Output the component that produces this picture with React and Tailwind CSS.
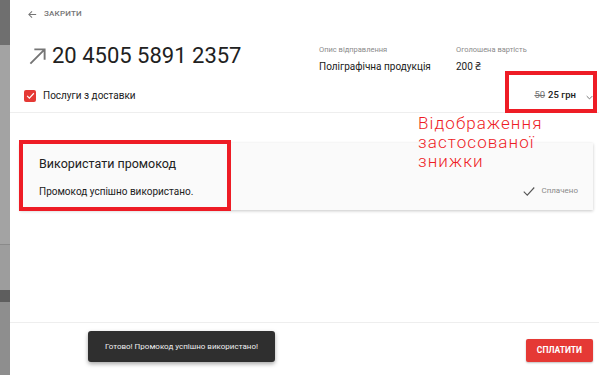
import React from 'react';

const ArrowLeft = () => (
  <svg width="11" height="11" viewBox="0 0 24 24" fill="none" stroke="#757575" strokeWidth="2.2">
    <path d="M20 12H4M11 5l-7 7 7 7" />
  </svg>
);

const ArrowUpRight = () => (
  <svg width="19" height="19" viewBox="0 0 24 24" fill="none" stroke="#757575" strokeWidth="2.4">
    <path d="M3 21L21 3M8 3h13v13" />
  </svg>
);

const Check = ({ size = 12, color = '#616161', width = 2 }) => (
  <svg width={size} height={size} viewBox="0 0 24 24" fill="none" stroke={color} strokeWidth={width}>
    <path d="M3 13l6 6L21 6" />
  </svg>
);

export default function App() {
  return (
    <div className="relative flex w-[599px] h-[375px] overflow-hidden bg-white" style={{ fontFamily: 'Roboto, "Noto Sans", sans-serif' }}>
      {/* dimmed page behind the drawer */}
      <div className="w-[10px] flex flex-col bg-[#9c9c9c]">
        <div className="h-[45px] bg-[#6f6f6f]" />
        <div className="h-[200px] bg-[#a3a3a3] border-b border-[#8a8a8a]" />
        <div className="h-[45px] bg-[#9d9d9d]" />
        <div className="h-[12px] bg-[#5e5e5e]" />
        <div className="flex-1 bg-[#8e8e8e]" />
      </div>

      {/* drawer */}
      <div className="flex-1 flex flex-col bg-white">
        <div className="h-[28px] flex items-center gap-[6px] pl-[17px]">
          <ArrowLeft />
          <span className="text-[8px] font-medium tracking-wide text-[#757575]">ЗАКРИТИ</span>
        </div>

        <div className="flex items-start pl-[18px] pt-[14px] h-[54px]">
          <div className="flex items-center gap-[5px] w-[291px]">
            <ArrowUpRight />
            <span className="text-[22px] leading-[28px] text-[#212121]">20 4505 5891 2357</span>
          </div>
          <div className="w-[137px] pt-[2px]">
            <div className="text-[7.5px] text-[#8a8a8a]">Опис відправлення</div>
            <div className="text-[10px] text-[#212121] mt-[4px]">Поліграфічна продукція</div>
          </div>
          <div className="pt-[2px]">
            <div className="text-[7.5px] text-[#8a8a8a]">Оголошена вартість</div>
            <div className="text-[10px] text-[#212121] mt-[4px]">200 ₴</div>
          </div>
        </div>

        <div className="flex items-center h-[31px] pb-[3px] pl-[14px] pr-[6px] border-b border-[#eeeeee]">
          <div className="w-[12px] h-[12px] rounded-[2px] bg-[#e53935] flex items-center justify-center">
            <Check size={9} color="#ffffff" width={3} />
          </div>
          <span className="ml-[7px] text-[10px] text-[#212121]">Послуги з доставки</span>
          <div className="ml-auto flex items-center">
            <span className="text-[9.5px] text-[#757575] line-through">50</span>
            <span className="ml-[3px] text-[9.5px] font-medium text-[#212121]">25 грн</span>
            <svg className="ml-[10px] mt-[4px]" width="7" height="5" viewBox="0 0 10 6" fill="none" stroke="#757575" strokeWidth="1.4">
              <path d="M1 1l4 4 4-4" />
            </svg>
          </div>
        </div>

        <div className="mt-[30px] ml-[10px] mr-[6px] h-[67px] bg-[#fafafa] shadow-[0_1px_3px_rgba(0,0,0,0.22)] flex flex-col px-[19px] pt-[12px]">
          <div className="text-[12.5px] text-[#212121]">Використати промокод</div>
          <div className="flex items-center mt-[10px]">
            <span className="text-[10px] text-[#212121]">Промокод успішно використано.</span>
            <div className="ml-auto flex items-center gap-[5px] mr-[-4px]">
              <Check size={14} color="#555555" width={1.9} />
              <span className="text-[8px] text-[#8a8a8a]">Сплачено</span>
            </div>
          </div>
        </div>

        <div className="flex-1" />

        <div className="h-[53px] border-t border-[#eeeeee] flex items-center justify-end pr-[6px]">
          <button className="mt-[3px] h-[23px] px-[11px] rounded-[2px] bg-[#e53935] text-white text-[8.5px] font-bold shadow-[0_1px_2px_rgba(0,0,0,0.25)]">
            СПЛАТИТИ
          </button>
        </div>
      </div>

      {/* snackbar */}
      <div className="absolute left-[88px] top-[331px] w-[187px] h-[31px] rounded-[3px] bg-[#2f2f2f] shadow-[0_2px_4px_rgba(0,0,0,0.35)] flex items-center justify-center">
        <span className="whitespace-nowrap text-[8px] text-[#eeeeee]">Готово! Промокод успішно використано!</span>
      </div>

      {/* annotations */}
      <div className="absolute left-[505px] top-[71px] w-[92px] h-[42px] border-[4px] border-[#ee1c25]" />
      <div className="absolute left-[19px] top-[140px] w-[212px] h-[71px] border-[4px] border-[#ee1c25]" />
      <div className="absolute left-[418px] top-[114px] text-[17px] leading-[19px] tracking-[1.1px] font-light text-[#ee1c25]">
        Відображення<br />застосованої<br />знижки
      </div>
    </div>
  );
}
